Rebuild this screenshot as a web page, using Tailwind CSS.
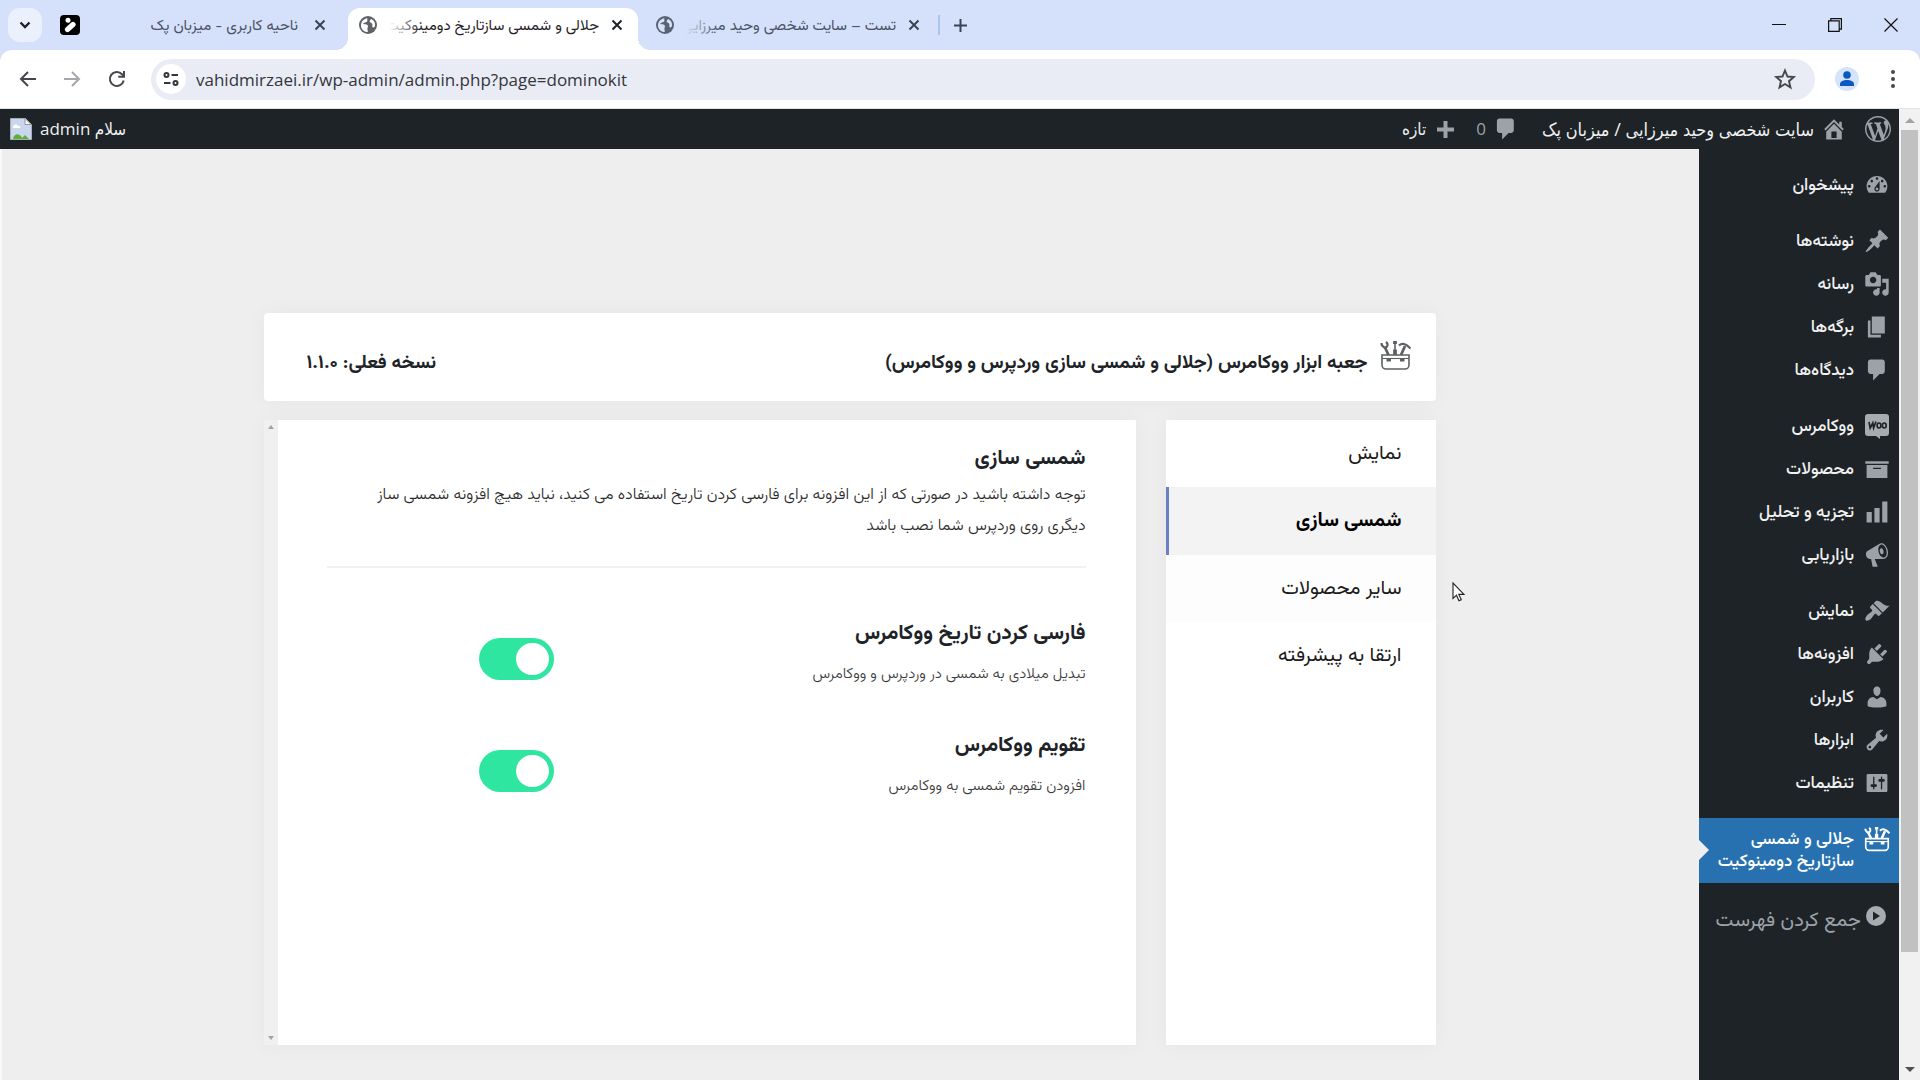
<!DOCTYPE html>
<html lang="fa">
<head>
<meta charset="utf-8">
<title>جلالی و شمسی سازتاریخ دومینوکیت</title>
<script src="https://cdn.jsdelivr.net/npm/@tailwindcss/browser@4"></script>
</head>
<body class="flex h-screen flex-col overflow-hidden bg-white font-[Vazirmatn,'DejaVu_Sans_Condensed',sans-serif] text-[#1d2327]">

<!-- Tab strip -->
<header class="flex h-[50px] shrink-0 items-center bg-[#d5e1fa] text-[15px] text-[#4a5264]">
  <button aria-label="جستجوی زبانه‌ها" class="ml-2 flex size-[34px] shrink-0 items-center justify-center rounded-xl bg-[#eaf1fd]">
    <svg class="size-4" viewBox="0 0 16 16" fill="none" stroke="#1f2329" stroke-width="2.4"><path d="M3.5 5.5 8 10l4.5-4.5"/></svg>
  </button>
  <div class="flex h-full w-[306px] items-center gap-4 pr-[22px] pl-[18px]">
    <svg class="size-5 shrink-0" viewBox="0 0 20 20"><rect width="20" height="20" rx="4" fill="#000"/><circle cx="8" cy="5.3" r="2.5" fill="#fff"/><path d="M7.5 14.5 13 9.5" stroke="#fff" stroke-width="5.2" stroke-linecap="round"/></svg>
    <span dir="rtl" class="min-w-0 flex-1 overflow-hidden pt-1 whitespace-nowrap">ناحیه کاربری - میزبان پک</span>
    <button aria-label="بستن" class="shrink-0"><svg class="size-3" viewBox="0 0 12 12" stroke="#3b4252" stroke-width="2"><path d="m1.500 1.500 9 9m0-9-9 9"/></svg></button>
  </div>
  <div class="relative mt-2 flex h-[42px] w-[290px] items-center gap-3 rounded-t-xl bg-white pr-[15px] pb-2 pl-[11px] text-[#1f2329]">
    <span class="absolute -left-3 bottom-0 size-3 bg-[radial-gradient(circle_at_top_left,transparent_12px,white_12px)]"></span>
    <span class="absolute -right-3 bottom-0 size-3 bg-[radial-gradient(circle_at_top_right,transparent_12px,white_12px)]"></span>
    <svg class="size-[18px] shrink-0" viewBox="0 0 18 18"><circle cx="9" cy="9" r="9" fill="#5f6368"/><path d="M8.500 2.200c-1 1.500.8 2.400-.6 3.600C6.300 6.800 4.600 6.500 4.300 8c1.700.3 3.700.2 4.500 1.500.7 1.300-.6 2-.4 3.300.1 1.200.4 2.100.4 3.200C4.800 16 2 13 2 9.200 2 5.600 4.900 2.500 8.500 2.200zM12 3c-.6 1.300-1.800 1.800-1.200 3.100.6 1 2 .6 2.500 1.800.4 1.300-.5 2.500.4 3.300.6.500 1.300-.1 2-.4C17 7.500 15 4.200 12 3z" fill="#fff"/></svg>
    <span class="relative min-w-0 flex-1 overflow-hidden pt-1"><span dir="rtl" class="block whitespace-nowrap">جلالی و شمسی سازتاریخ دومینوکیت</span><span class="absolute inset-y-0 left-0 w-8 bg-linear-to-r from-white to-white/0"></span></span>
    <button aria-label="بستن" class="shrink-0"><svg class="size-3" viewBox="0 0 12 12" stroke="#1f2329" stroke-width="2"><path d="m1.500 1.500 9 9m0-9-9 9"/></svg></button>
  </div>
  <div class="flex h-full w-[300px] items-center gap-3 border-r-2 border-transparent pr-[16px] pl-[18px]">
    <svg class="size-[18px] shrink-0" viewBox="0 0 18 18"><circle cx="9" cy="9" r="9" fill="#5a6373"/><path d="M8.500 2.200c-1 1.500.8 2.400-.6 3.600C6.300 6.800 4.600 6.500 4.300 8c1.700.3 3.700.2 4.500 1.500.7 1.300-.6 2-.4 3.300.1 1.200.4 2.100.4 3.200C4.800 16 2 13 2 9.200 2 5.600 4.900 2.500 8.500 2.200zM12 3c-.6 1.300-1.800 1.800-1.200 3.100.6 1 2 .6 2.500 1.800.4 1.300-.5 2.500.4 3.300.6.500 1.300-.1 2-.4C17 7.500 15 4.200 12 3z" fill="#d5e1fa"/></svg>
    <span class="relative min-w-0 flex-1 overflow-hidden pt-1"><span dir="rtl" class="block whitespace-nowrap">تست – سایت شخصی وحید میرزایی</span><span class="absolute inset-y-0 left-0 w-8 bg-linear-to-r from-[#d5e1fa] to-[#d5e1fa]/0"></span></span>
    <button aria-label="بستن" class="shrink-0"><svg class="size-3" viewBox="0 0 12 12" stroke="#3b4252" stroke-width="2"><path d="m1.500 1.500 9 9m0-9-9 9"/></svg></button>
  </div>
  <span class="h-5 w-0.5 bg-[#a9c3f3]"></span>
  <button aria-label="زبانه جدید" class="ml-[13px]"><svg class="size-[15px]" viewBox="0 0 15 15" stroke="#3b4252" stroke-width="2"><path d="M7.500 1v13M1 7.500h13"/></svg></button>
  <div class="ml-auto flex items-center gap-[42px] pr-[22px]">
    <button aria-label="کمینه"><svg class="size-[14px]" viewBox="0 0 14 14" stroke="#111" fill="none"><path d="M0 6.500h14"/></svg></button>
    <button aria-label="بازگردانی"><svg class="size-[14px]" viewBox="0 0 14 14" stroke="#111" stroke-width="1.200" fill="none"><path d="M.6 2.800h10.600v10.600H.6zM2.800 2.800V.6h10.600v10.600h-2.200"/></svg></button>
    <button aria-label="بستن پنجره"><svg class="size-[14px]" viewBox="0 0 14 14" stroke="#111" stroke-width="1.200"><path d="m.5.5 13 13m0-13-13 13"/></svg></button>
  </div>
</header>

<!-- Address bar -->
<div class="h-[59px] shrink-0 bg-[#d5e1fa]">
<nav class="flex h-full items-center rounded-t-xl border-b border-[#dfe3e6] bg-white pl-[19px]">
  <button aria-label="عقب"><svg class="size-[18px]" viewBox="0 0 18 18" stroke="#44474c" stroke-width="2" fill="none"><path d="M17 9H2m7-7L2 9l7 7"/></svg></button>
  <button aria-label="جلو" class="ml-[26px]"><svg class="size-[18px]" viewBox="0 0 18 18" stroke="#a5a7aa" stroke-width="2" fill="none"><path d="M1 9h15M9 2l7 7-7 7"/></svg></button>
  <button aria-label="بارگذاری مجدد" class="ml-[27px]"><svg class="size-[18px]" viewBox="0 0 18 18" stroke="#44474c" stroke-width="2" fill="none"><path d="M15.700 10.500A7 7 0 1 1 14 4.200l2 2"/><path d="M16 1v5.800h-5.800"/></svg></button>
  <div class="ml-[25px] flex h-[41px] min-w-0 flex-1 items-center rounded-full bg-[#e9ecf5] pr-[18px] pl-[5px]">
    <button aria-label="اطلاعات سایت" class="flex size-[30px] shrink-0 items-center justify-center rounded-full bg-white"><svg class="size-4" viewBox="0 0 16 16" stroke="#33363b" stroke-width="2" fill="none"><circle cx="3.500" cy="4" r="2"/><path d="M8.500 4H15M1 12h6.500"/><circle cx="12.500" cy="12" r="2"/></svg></button>
    <input aria-label="نشانی" value="vahidmirzaei.ir/wp-admin/admin.php?page=dominokit" class="ml-[10px] min-w-0 flex-1 bg-transparent pt-0.5 font-['Open_Sans',sans-serif] text-[17px] text-[#33363b] outline-none">
    <button aria-label="نشانک"><svg class="size-6" viewBox="0 0 24 24" stroke="#44474c" stroke-width="1.900" fill="none"><path d="m12 3.500 2.500 6 6.300.5-4.800 4.200 1.500 6.200-5.500-3.400-5.500 3.400L8 14.200 3.200 10l6.300-.5z"/></svg></button>
  </div>
  <button aria-label="نمایه" class="ml-5 flex size-6 items-center justify-center rounded-full bg-[#d5e3fc]"><svg class="size-4" viewBox="0 0 16 16" fill="#0b57c4"><circle cx="8" cy="4" r="3.800"/><path d="M1 15v-2c0-2.600 4-4 7-4s7 1.400 7 4v2z"/></svg></button>
  <button aria-label="منو" class="mr-[18px] ml-[25px]"><svg class="h-[18px] w-[18px]" viewBox="0 0 18 18" fill="#44474c"><circle cx="9" cy="2" r="2"/><circle cx="9" cy="9" r="2"/><circle cx="9" cy="16" r="2"/></svg></button>
</nav>
</div>

<div class="flex min-h-0 flex-1">
  <div dir="rtl" class="flex min-w-0 flex-1 flex-col">

    <!-- Admin bar -->
    <div class="flex h-[40px] shrink-0 items-center bg-[#1d2327] pr-2 pl-[10px] font-['Open_Sans','DejaVu_Sans_Condensed',sans-serif] text-[17px] text-[#f0f0f1]">
      <a href="#" aria-label="وردپرس"><svg class="size-[26px]" viewBox="0 0 20 20" fill="#9ca2a7"><path d="M20 10c0-5.510-4.490-10-10-10C4.480 0 0 4.490 0 10c0 5.520 4.480 10 10 10 5.510 0 10-4.480 10-10zM7.780 15.370L4.370 6.220c.55-.02 1.170-.08 1.170-.08.5-.06.44-1.130-.06-1.110 0 0-1.450.11-2.370.11-.18 0-.37 0-.58-.01C4.120 2.690 6.870 1.110 10 1.110c2.330 0 4.450.87 6.050 2.340-.68-.11-1.650.39-1.650 1.580 0 .74.45 1.360.9 2.100.35.61.55 1.360.55 2.460 0 1.490-1.400 5-1.400 5l-3.030-8.370c.54-.02.82-.17.82-.17.5-.05.44-1.250-.06-1.220 0 0-1.440.12-2.380.12-.87 0-2.330-.12-2.330-.12-.5-.03-.56 1.200-.06 1.220l.92.08 1.260 3.410zM17.410 10c.24-.64.74-1.870.43-4.250.7 1.290 1.050 2.710 1.050 4.250 0 3.290-1.730 6.240-4.400 7.780.97-2.590 1.940-5.200 2.920-7.780zM6.100 18.090C3.120 16.650 1.110 13.530 1.110 10c0-1.300.23-2.480.72-3.590C3.250 10.300 4.670 14.200 6.100 18.090zm4.030-6.630l2.580 6.980c-.86.29-1.760.45-2.710.45-.79 0-1.570-.11-2.290-.33.81-2.380 1.620-4.740 2.420-7.100z"/></svg></a>
      <a href="#" class="mr-[18px] flex items-center gap-[7px]"><svg class="size-[26px]" viewBox="0 0 20 20" fill="#9ca2a7"><path d="M16 8.500l1.530 1.530-1.060 1.060L10 4.600l-6.470 6.490-1.060-1.060L10 2.500l4 4v-2h2v4zm-6-2.460l6 5.990V18H4v-5.970zM12 17v-5H8v5h4z"/></svg><span class="text-[18px]">سایت شخصی وحید میرزایی / میزبان پک</span></a>
      <a href="#" class="mr-[23px] flex items-center gap-[7px] text-[#9ca2a7]"><svg class="size-[26px]" viewBox="0 0 20 20" fill="#9ca2a7"><path d="M5 2h9c1.100 0 2 .9 2 2v7c0 1.100-.9 2-2 2h-2l-5 5v-5H5c-1.100 0-2-.9-2-2V4c0-1.100.9-2 2-2z"/></svg><span>0</span></a>
      <a href="#" class="mr-[22px] flex items-center gap-[11px]"><svg class="size-[17px]" viewBox="0 0 17 17" stroke="#9ca2a7" stroke-width="4"><path d="M8.500 0v17M0 8.500h17"/></svg><span>تازه</span></a>
      <a href="#" class="mr-auto flex items-center gap-2"><span>سلام admin</span><svg class="size-[22px]" viewBox="0 0 22 22"><path d="M.5.500h15l6 6v15H.5z" fill="#c9d6ee" stroke="#a9adb3"/><path d="M15 .5v6h6z" fill="#fff" stroke="#8f949b"/><path d="M3 21c1-6 7-6 9-1l3-3 4 4z" fill="#5bb236"/><path d="M3 9c1-3 4-3 5-1 2-1 3 1 2 2H3z" fill="#fff"/></svg></a>
    </div>

    <div class="flex min-h-0 flex-1">
      <!-- Side menu -->
      <aside class="w-[200px] shrink-0 bg-[#1d2327] pt-[15px] text-[17px] font-medium text-[#f0f0f1]">
        <ul>
          <li><a href="#" class="flex h-[43px] items-center gap-[10px] pt-0.5 pr-[9px]"><svg class="mb-1 size-[26px] shrink-0" viewBox="0 0 20 20" fill="#9ca2a7"><path d="M3.760 16h12.480c1.100-1.370 1.760-3.110 1.760-5 0-4.420-3.580-8-8-8s-8 3.580-8 8c0 1.890.66 3.630 1.760 5zM10 4c.55 0 1 .45 1 1s-.45 1-1 1-1-.45-1-1 .45-1 1-1zM6 6c.55 0 1 .45 1 1s-.45 1-1 1-1-.45-1-1 .45-1 1-1zm8 0c.55 0 1 .45 1 1s-.45 1-1 1-1-.45-1-1 .45-1 1-1zm-5.370 5.550L12 7v6c0 1.100-.9 2-2 2s-2-.9-2-2c0-.57.24-1.080.63-1.450zM4 10c.55 0 1 .45 1 1s-.45 1-1 1-1-.45-1-1 .45-1 1-1zm12 0c.55 0 1 .45 1 1s-.45 1-1 1-1-.45-1-1 .45-1 1-1zm-5 3c0-.55-.45-1-1-1s-1 .45-1 1 .45 1 1 1 1-.45 1-1z"/></svg>پیشخوان</a></li>
          <li class="mt-[13px]"><a href="#" class="flex h-[43px] items-center gap-[10px] pt-0.5 pr-[9px]"><svg class="mb-1 size-[26px] shrink-0" viewBox="0 0 20 20" fill="#9ca2a7"><path d="M10.440 3.020l1.820-1.820 6.360 6.350-1.830 1.820c-1.050-.68-2.480-.57-3.410.36l-.75.75c-.92.93-1.040 2.350-.35 3.410l-1.830 1.820-2.410-2.410-2.800 2.790c-.42.42-3.380 2.710-3.800 2.290s1.860-3.390 2.280-3.810l2.790-2.790L4.100 9.360l1.830-1.820c1.050.69 2.480.57 3.400-.36l.75-.75c.93-.92 1.050-2.350.36-3.410z"/></svg>نوشته‌ها</a></li>
          <li><a href="#" class="flex h-[43px] items-center gap-[10px] pt-0.5 pr-[9px]"><svg class="mb-1 size-[26px] shrink-0" viewBox="0 0 20 20" fill="#9ca2a7"><path d="M13 11V4c0-.55-.45-1-1-1h-1.670L9 1H5L3.670 3H2c-.55 0-1 .45-1 1v7c0 .55.45 1 1 1h10c.55 0 1-.45 1-1zM7 4.500c1.380 0 2.500 1.120 2.500 2.500S8.380 9.500 7 9.500 4.500 8.380 4.500 7 5.620 4.500 7 4.500zM14 6h5v10.500c0 1.380-1.120 2.500-2.500 2.500S14 17.880 14 16.500s1.120-2.500 2.500-2.500c.17 0 .34.02.5.05V9h-3V6zm-4 8.050V13h2v3.500c0 1.380-1.120 2.500-2.500 2.500S7 17.880 7 16.500 8.120 14 9.500 14c.17 0 .34.02.5.05z"/></svg>رسانه</a></li>
          <li><a href="#" class="flex h-[43px] items-center gap-[10px] pt-0.5 pr-[9px]"><svg class="mb-1 size-[26px] shrink-0" viewBox="0 0 20 20" fill="#9ca2a7"><path d="M6 15V2h10v13H6zm-1 1h8v2H3V5h2v11z"/></svg>برگه‌ها</a></li>
          <li><a href="#" class="flex h-[43px] items-center gap-[10px] pt-0.5 pr-[9px]"><svg class="mb-1 size-[26px] shrink-0" viewBox="0 0 20 20" fill="#9ca2a7"><path d="M5 2h9c1.100 0 2 .9 2 2v7c0 1.100-.9 2-2 2h-2l-5 5v-5H5c-1.100 0-2-.9-2-2V4c0-1.100.9-2 2-2z"/></svg>دیدگاه‌ها</a></li>
          <li class="mt-[13px]"><a href="#" class="flex h-[43px] items-center gap-[10px] pt-0.5 pr-[9px]"><svg class="mb-1 size-[26px] shrink-0" viewBox="0 0 26 26"><path d="M4 1h18a3 3 0 0 1 3 3v16a3 3 0 0 1-3 3h-6v3l-4-3H4a3 3 0 0 1-3-3V4a3 3 0 0 1 3-3z" fill="#a7acb0"/><path d="m5 9 1.200 6 2.600-5 .8 5L12 8.500" fill="none" stroke="#1d2327" stroke-width="1.700"/><ellipse cx="15" cy="12.500" rx="1.900" ry="2.500" fill="none" stroke="#1d2327" stroke-width="1.600"/><ellipse cx="20.300" cy="12.500" rx="1.900" ry="2.500" fill="none" stroke="#1d2327" stroke-width="1.600"/></svg>ووکامرس</a></li>
          <li><a href="#" class="flex h-[43px] items-center gap-[10px] pt-0.5 pr-[9px]"><svg class="mb-1 size-[26px] shrink-0" viewBox="0 0 20 20" fill="#9ca2a7"><path d="M19 4v2H1V4h18zM2 7h16v10H2V7zm11 3V9H7v1h6z"/></svg>محصولات</a></li>
          <li><a href="#" class="flex h-[43px] items-center gap-[10px] pt-0.5 pr-[9px]"><svg class="mb-1 size-[26px] shrink-0" viewBox="0 0 20 20" fill="#9ca2a7"><path d="M18 18V2h-4v16h4zm-6 0V7H8v11h4zm-6 0v-8H2v8h4z"/></svg>تجزیه و تحلیل</a></li>
          <li><a href="#" class="flex h-[43px] items-center gap-[10px] pt-0.5 pr-[9px]"><svg class="mb-1 size-[26px] shrink-0" viewBox="0 0 20 20" fill="#9ca2a7"><path d="M18.150 5.940c.46 1.620.38 3.220-.02 4.480-.42 1.280-1.260 2.180-2.300 2.480-.16.06-.26.06-.4.06-.06.02-.12.02-.18.02-.06.02-.14.02-.22.02h-6.800l2.220 5.500c.02.14-.06.26-.14.34-.08.1-.24.16-.34.16H6.950c-.1 0-.26-.06-.34-.16-.08-.08-.16-.2-.14-.34l-1-5.500H4.250l-.02-.02c-.5.06-1.080-.18-1.540-.62s-.88-1.080-1.060-1.880c-.24-.8-.2-1.560-.02-2.200.18-.62.58-1.080 1.060-1.300l.02-.02 9-5.400c.1-.06.18-.1.24-.16.06-.04.14-.08.24-.12.16-.08.28-.12.5-.18 1.040-.3 2.240.1 3.220.98s1.840 2.240 2.260 3.860zm-2.580 5.980h-.02c.4-.1.74-.34 1.040-.7.58-.7.86-1.760.86-3.040 0-.64-.1-1.300-.28-1.980-.34-1.360-1.020-2.500-1.780-3.240s-1.680-1.100-2.460-.88c-.82.22-1.400.96-1.700 2-.32 1.040-.28 2.360.06 3.720.38 1.360 1 2.500 1.800 3.240.78.74 1.620 1.100 2.480.88zm-2.540-7.080c.22-.04.42-.02.62.04.38.16.76.48 1.020 1s.42 1.200.42 1.780c0 .3-.04.56-.12.8-.18.48-.44.84-.86.94-.34.1-.8-.06-1.140-.4s-.64-.86-.78-1.500c-.18-.62-.12-1.240.02-1.720s.48-.84.82-.94z"/></svg>بازاریابی</a></li>
          <li class="mt-[13px]"><a href="#" class="flex h-[43px] items-center gap-[10px] pt-0.5 pr-[9px]"><svg class="mb-1 size-[26px] shrink-0" viewBox="0 0 20 20" fill="#9ca2a7"><path d="M14.480 11.060L7.410 3.990l1.500-1.500c.5-.56 2.300-.47 3.510.32 1.210.8 1.430 1.280 2.910 2.100 1.180.64 2.450 1.260 4.450.85zm-.71.71L6.700 4.700 4.930 6.470c-.39.39-.39 1.020 0 1.410l1.060 1.060c.39.39.39 1.030 0 1.420-.6.6-1.430 1.110-2.210 1.690-.35.26-.7.53-1.010.84C1.430 14.230.4 16.080 1.400 17.070c.99 1 2.840-.03 4.180-1.360.31-.31.58-.66.85-1.020.57-.78 1.080-1.610 1.690-2.210.39-.39 1.020-.39 1.410 0l1.060 1.060c.39.39 1.020.39 1.410 0z"/></svg>نمایش</a></li>
          <li><a href="#" class="flex h-[43px] items-center gap-[10px] pt-0.5 pr-[9px]"><svg class="mb-1 size-[26px] shrink-0" viewBox="0 0 20 20" fill="#9ca2a7"><path d="M13.110 4.360L9.870 7.600 8 5.730l3.240-3.240c.35-.34 1.050-.2 1.560.32.52.51.66 1.210.31 1.550zm-8 1.770l.91-1.120 9.010 9.010-1.190.84c-.71.71-2.630 1.160-3.820 1.160H6.140L4.900 17.260c-.59.59-1.540.59-2.120 0-.59-.58-.59-1.530 0-2.120l1.240-1.240v-3.880c0-1.130.4-3.190 1.090-3.890zm7.260 3.970l3.240-3.240c.34-.35 1.040-.21 1.550.31.52.51.66 1.210.31 1.550l-3.240 3.250z"/></svg>افزونه‌ها</a></li>
          <li><a href="#" class="flex h-[43px] items-center gap-[10px] pt-0.5 pr-[9px]"><svg class="mb-1 size-[26px] shrink-0" viewBox="0 0 20 20" fill="#9ca2a7"><path d="M10 9.250c-2.270 0-2.730-3.440-2.730-3.440C7 4.020 7.820 2 9.970 2c2.160 0 2.980 2.020 2.710 3.810 0 0-.41 3.440-2.680 3.440zm0 2.570L12.720 10c2.390 0 4.520 2.330 4.520 4.530v2.490s-3.650 1.130-7.240 1.130c-3.650 0-7.240-1.130-7.240-1.130v-2.490c0-2.250 1.940-4.480 4.470-4.480z"/></svg>کاربران</a></li>
          <li><a href="#" class="flex h-[43px] items-center gap-[10px] pt-0.5 pr-[9px]"><svg class="mb-1 size-[26px] shrink-0" viewBox="0 0 20 20" fill="#9ca2a7"><path d="M16.680 9.770c-1.340 1.340-3.300 1.670-4.950.99l-5.410 6.520c-.99.99-2.590.99-3.580 0s-.99-2.590 0-3.570l6.520-5.420c-.68-1.650-.35-3.610.99-4.950 1.280-1.280 3.120-1.620 4.720-1.060l-2.890 2.890 2.820 2.820 2.860-2.870c.53 1.580.18 3.390-1.080 4.650zM3.810 16.210c.4.39 1.040.39 1.430 0 .4-.4.4-1.040 0-1.430-.39-.4-1.030-.4-1.430 0-.39.39-.39 1.030 0 1.430z"/></svg>ابزارها</a></li>
          <li><a href="#" class="flex h-[43px] items-center gap-[10px] pt-0.5 pr-[9px]"><svg class="mb-1 size-[26px] shrink-0" viewBox="0 0 20 20" fill="#9ca2a7"><path d="M18 16V4c0-.55-.45-1-1-1H3c-.55 0-1 .45-1 1v12c0 .55.45 1 1 1h14c.55 0 1-.45 1-1zM8 11h1c.55 0 1 .45 1 1s-.45 1-1 1H8v1.500c0 .28-.22.5-.5.5s-.5-.22-.5-.5V13H6c-.55 0-1-.45-1-1s.45-1 1-1h1V5.500c0-.28.22-.5.5-.5s.5.22.5.5V11zm5-2h-1c-.55 0-1-.45-1-1s.45-1 1-1h1V5.500c0-.28.22-.5.5-.5s.5.22.5.5V7h1c.55 0 1 .45 1 1s-.45 1-1 1h-1v5.500c0 .28-.22.5-.5.5s-.5-.22-.5-.5V9z"/></svg>تنظیمات</a></li>
          <li class="mt-[13px]"><a href="#" aria-current="page" class="relative flex h-[65px] items-start gap-[10px] bg-[#2871b1] pt-[9px] pr-[9px] leading-[22px] text-white">
            <svg class="h-[25px] w-[26px] shrink-0" viewBox="0 0 31 30" fill="none" stroke="#fff"><path d="M2 14h27v10a4 4 0 0 1-4 4H6a4 4 0 0 1-4-4z" stroke-width="2"/><path d="M2 17.500h27" stroke-width="1.300"/><path d="M6.500 17h4.500v4H6.500zm13.500 0h4.500v4H20z" fill="#fff" stroke="none"/><path d="M8.500 14 5 6.500M21 14l4-9" stroke-width="3"/><path d="M1.500 2c0 4 4 5.500 5.500 3.500 1-2 .5-3.500-1-4.500M19 4.500c3-3 7-2 11.500 3" stroke-width="2.400"/><path d="M15 0v9" stroke-width="2"/><path d="M15 0v3m0 5.500V14" stroke-width="4"/></svg>
            <span class="pt-0.5">جلالی و شمسی<br>سازتاریخ دومینوکیت</span>
            <span class="absolute top-[22px] left-0 border-y-10 border-l-10 border-y-transparent border-l-[#efefef]"></span>
          </a></li>
        </ul>
        <button class="mt-[17px] flex h-10 items-center gap-[4px] pt-0.5 pr-[12px] text-[20px] font-normal text-[#9ca2a7]"><svg class="mb-2.5 size-[22px] shrink-0" viewBox="0 0 22 22"><circle cx="11" cy="11" r="10" fill="#a7acb0"/><path d="M8 6.500v9l7-4.500z" fill="#1d2327"/></svg>جمع کردن فهرست</button>
      </aside>

      <!-- Settings page -->
      <main class="min-w-0 flex-1 bg-[#eeeeee] pt-[164px] shadow-[inset_2px_0_#f9f9fa]">
        <div class="mx-auto w-full max-w-[1172px]">
          <header class="flex h-[88px] items-start rounded bg-white pt-7 pr-[25px] pl-[43px] text-[19px] font-bold shadow-[0_0_20px_rgba(0,0,0,0.04)]">
            <svg class="h-[30px] w-[31px] shrink-0" viewBox="0 0 31 30" fill="none" stroke="#5e6163"><path d="M2 14h27v10a4 4 0 0 1-4 4H6a4 4 0 0 1-4-4z" stroke-width="1.600"/><path d="M2 17.500h27" stroke-width="1.100"/><path d="M6.500 17h4.500v3.500H6.500zm13.500 0h4.500v3.500H20z" fill="#5e6163" stroke="none"/><path d="M8.500 14 5 6.500M21 14l4-9" stroke-width="2.800"/><path d="M1.500 2c0 4 4 5.500 5.500 3.500 1-2 .5-3.500-1-4.500M19 4.500c3-3 7-2 11.500 3" stroke-width="2.200"/><path d="M15 0v9" stroke-width="1.600"/><path d="M15 0v3m0 5.500V14" stroke-width="3.800"/></svg>
            <h1 class="mt-[9px] mr-3">جعبه ابزار ووکامرس (جلالی و شمسی سازی وردپرس و ووکامرس)</h1>
            <p class="mt-[9px] mr-auto">نسخه فعلی: ۱.۱.۰</p>
          </header>

          <div class="mt-[19px] flex h-[625px] gap-[30px]">
            <nav class="w-[270px] shrink-0 bg-white text-[20px] text-[#1b1b1b] shadow-[0_0_20px_rgba(0,0,0,0.04)]">
              <a href="#" class="flex h-[67px] items-center pr-[34px]">نمایش</a>
              <a href="#" class="flex h-[68px] items-center border-l-3 border-[#6c7fc4] bg-[#f3f3f3] pr-[34px] font-bold text-black">شمسی سازی</a>
              <a href="#" class="flex h-[67px] items-center bg-[#fdfdfd] pr-[34px]">سایر محصولات</a>
              <a href="#" class="flex h-[68px] items-center pr-[34px]">ارتقا به پیشرفته</a>
            </nav>

            <section class="flex min-w-0 flex-1 bg-white shadow-[0_0_20px_rgba(0,0,0,0.04)]">
              <div class="min-w-0 flex-1 pt-[22px] pr-[50px] pl-[49px]">
                <h2 class="text-[21px] leading-[34px] font-bold">شمسی سازی</h2>
                <p class="mt-1 pl-6 text-base leading-[31px] font-light text-[#2b2b2b]">توجه داشته باشید در صورتی که از این افزونه برای فارسی کردن تاریخ استفاده می کنید، نباید هیچ افزونه شمسی ساز دیگری روی وردپرس شما نصب باشد</p>
                <hr class="mt-[24px] border-t-2 border-[#f1f1f1]">
                <div class="mt-[46px] flex h-28">
                  <label for="fa-date" class="w-[70%] pt-0.5"><span class="block text-[21px] leading-[36px] font-bold">فارسی کردن تاریخ ووکامرس</span><span class="mt-[11px] block text-[15px] leading-6 font-light text-[#3c3c3c]">تبدیل میلادی به شمسی در وردپرس و ووکامرس</span></label>
                  <input id="fa-date" type="checkbox" checked class="mt-6 flex h-[42px] w-[75px] appearance-none items-center justify-end rounded-full bg-[#2ee6a0] pl-[37px] before:h-8 before:w-[33px] before:shrink-0 before:rounded-full before:bg-white">
                </div>
                <div class="flex h-28">
                  <label for="fa-calendar" class="w-[70%] pt-0.5"><span class="block text-[21px] leading-[36px] font-bold">تقویم ووکامرس</span><span class="mt-[11px] block text-[15px] leading-6 font-light text-[#3c3c3c]">افزودن تقویم شمسی به ووکامرس</span></label>
                  <input id="fa-calendar" type="checkbox" checked class="mt-6 flex h-[42px] w-[75px] appearance-none items-center justify-end rounded-full bg-[#2ee6a0] pl-[37px] before:h-8 before:w-[33px] before:shrink-0 before:rounded-full before:bg-white">
                </div>
              </div>
              <div class="flex w-[14px] shrink-0 flex-col items-center justify-between bg-[#f0f0f0] py-[5px]">
                <svg class="h-1 w-1.5" viewBox="0 0 6 4" fill="#a3a3a3"><path d="M3 0 6 4H0z"/></svg>
                <svg class="h-1 w-1.5" viewBox="0 0 6 4" fill="#a3a3a3"><path d="M0 0h6L3 4z"/></svg>
              </div>
            </section>
          </div>
        </div>
      </main>
    </div>
  </div>

  <!-- Window scrollbar -->
  <div class="flex w-[21px] shrink-0 flex-col items-center bg-[#f1f1f1] pt-[9px] pb-2">
    <svg class="h-[5px] w-[10px]" viewBox="0 0 10 5" fill="#a3a3a3"><path d="M5 0l5 5H0z"/></svg>
    <div class="mt-[7px] h-[822px] w-[17px] bg-[#c1c1c1]"></div>
    <svg class="mt-auto h-[5px] w-[10px]" viewBox="0 0 10 5" fill="#505050"><path d="M0 0h10L5 5z"/></svg>
  </div>
</div>

<!-- Mouse pointer -->
<svg class="absolute top-[582px] left-[1452px] h-5 w-[14px]" viewBox="0 0 14 20"><path d="M1 1v15.500l3.500-3.300 2.500 5.600 2.300-1-2.500-5.400H12z" fill="#fff" stroke="#222" stroke-width="1.100"/></svg>
</body>
</html>
